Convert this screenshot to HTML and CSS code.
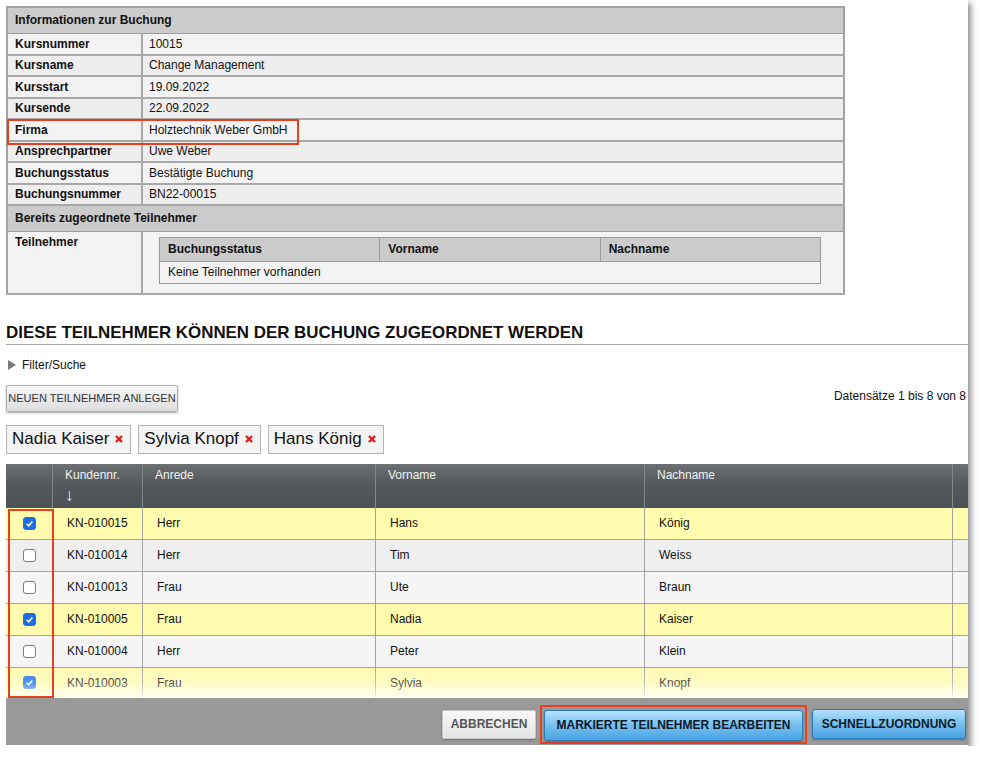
FILE: index.html
```html
<!DOCTYPE html>
<html lang="de">
<head>
    <meta charset="UTF-8">
    <meta name="viewport" content="width=device-width, initial-scale=1.0">
    <title>Teilnehmer zuordnen</title>
    <link rel="stylesheet" href="styles.css">
</head>
<body>
    <div class="window">
        <table class="info">
            <colgroup>
                <col class="label-col">
                <col>
            </colgroup>
            <tr><th class="group" colspan="2">Informationen zur Buchung</th></tr>
            <tr class="odd"><td class="label">Kursnummer</td><td>10015</td></tr>
            <tr class="even"><td class="label">Kursname</td><td>Change Management</td></tr>
            <tr class="odd"><td class="label">Kursstart</td><td>19.09.2022</td></tr>
            <tr class="even"><td class="label">Kursende</td><td>22.09.2022</td></tr>
            <tr class="odd"><td class="label marked">Firma</td><td>Holztechnik Weber GmbH</td></tr>
            <tr class="even"><td class="label">Ansprechpartner</td><td>Uwe Weber</td></tr>
            <tr class="odd"><td class="label">Buchungsstatus</td><td>Bestätigte Buchung</td></tr>
            <tr class="even"><td class="label">Buchungsnummer</td><td>BN22-00015</td></tr>
            <tr><th class="group" colspan="2">Bereits zugeordnete Teilnehmer</th></tr>
            <tr class="odd">
                <td class="label top">Teilnehmer</td>
                <td class="nested-cell">
                    <table class="nested">
                        <tr><th>Buchungsstatus</th><th>Vorname</th><th>Nachname</th></tr>
                        <tr><td colspan="3">Keine Teilnehmer vorhanden</td></tr>
                    </table>
                </td>
            </tr>
        </table>

        <h2 class="section-title">DIESE TEILNEHMER KÖNNEN DER BUCHUNG ZUGEORDNET WERDEN</h2>

        <div class="filter"><span class="tri"></span>Filter/Suche</div>

        <div class="toolbar">
            <button class="btn-light">NEUEN TEILNEHMER ANLEGEN</button>
            <span class="count">Datensätze 1 bis 8 von 8</span>
        </div>

        <div class="chips">
            <span class="chip">Nadia Kaiser<svg class="x" viewBox="0 0 8 8"><path d="M1 1L7 7M7 1L1 7"/></svg></span>
            <span class="chip">Sylvia Knopf<svg class="x" viewBox="0 0 8 8"><path d="M1 1L7 7M7 1L1 7"/></svg></span>
            <span class="chip">Hans König<svg class="x" viewBox="0 0 8 8"><path d="M1 1L7 7M7 1L1 7"/></svg></span>
        </div>

        <div class="grid">
            <div class="grid-head row">
                <div class="cell"></div>
                <div class="cell">Kundennr.<br><span class="sort">↓</span></div>
                <div class="cell">Anrede</div>
                <div class="cell">Vorname</div>
                <div class="cell">Nachname</div>
                <div class="cell"></div>
            </div>
            <div class="grid-body">
                <div class="row sel"><div class="cell cb-cell"><span class="cb on"><svg viewBox="0 0 13 13"><path d="M3.2 6.8l2.3 2.3 4.3-5"/></svg></span></div><div class="cell">KN-010015</div><div class="cell">Herr</div><div class="cell">Hans</div><div class="cell">König</div><div class="cell"></div></div>
                <div class="row even"><div class="cell cb-cell"><span class="cb"></span></div><div class="cell">KN-010014</div><div class="cell">Herr</div><div class="cell">Tim</div><div class="cell">Weiss</div><div class="cell"></div></div>
                <div class="row odd"><div class="cell cb-cell"><span class="cb"></span></div><div class="cell">KN-010013</div><div class="cell">Frau</div><div class="cell">Ute</div><div class="cell">Braun</div><div class="cell"></div></div>
                <div class="row sel"><div class="cell cb-cell"><span class="cb on"><svg viewBox="0 0 13 13"><path d="M3.2 6.8l2.3 2.3 4.3-5"/></svg></span></div><div class="cell">KN-010005</div><div class="cell">Frau</div><div class="cell">Nadia</div><div class="cell">Kaiser</div><div class="cell"></div></div>
                <div class="row odd"><div class="cell cb-cell"><span class="cb"></span></div><div class="cell">KN-010004</div><div class="cell">Herr</div><div class="cell">Peter</div><div class="cell">Klein</div><div class="cell"></div></div>
                <div class="row sel last"><div class="cell cb-cell"><span class="cb on"><svg viewBox="0 0 13 13"><path d="M3.2 6.8l2.3 2.3 4.3-5"/></svg></span></div><div class="cell">KN-010003</div><div class="cell">Frau</div><div class="cell">Sylvia</div><div class="cell">Knopf</div><div class="cell"></div></div>
                <div class="fade"></div>
            </div>
            <div class="select-mark"></div>
            <div class="grid-foot">
                <button class="btn-cancel">ABBRECHEN</button>
                <span class="mark"><button class="btn-blue">MARKIERTE TEILNEHMER BEARBEITEN</button></span>
                <button class="btn-blue">SCHNELLZUORDNUNG</button>
            </div>
        </div>
    </div>
</body>
</html>
```

FILE: styles.css
```css
* {
    box-sizing: border-box;
    margin: 0;
    padding: 0;
}
body {
    font-family: "Liberation Sans", Arial, Helvetica, sans-serif;
    font-size: 12px;
    color: #111;
    background-color: #fff;
}
.window {
    width: 968px;
    padding: 6px 0 1px 6px;
    background-color: #fff;
    box-shadow: 3px 3px 6px rgba(0, 0, 0, 0.45);
}

/* info table */
.info {
    width: 839px;
    border-collapse: collapse;
    border: 2px solid #a2a2a2;
}
.label-col {
    width: 135px;
}
.info th.group {
    background-color: #cbcbcb;
    text-align: left;
    height: 26px;
    padding: 0 7px;
    border: 1px solid #9c9c9c;
}
.info td {
    height: 21.5px;
    padding: 0 6px;
    border: 1px solid #a8a8a8;
    border-bottom-width: 2px;
}
.info td.label {
    font-weight: bold;
    padding-left: 7px;
    border-right-width: 2px;
}
.info tr.odd td {
    background-color: #f3f3f3;
}
.info tr.even td {
    background-color: #eeeeee;
}
.info td.marked {
    position: relative;
}
.info td.marked::after {
    content: "";
    position: absolute;
    left: -1px;
    top: -1px;
    width: 288px;
    height: 22px;
    border: 2px solid #e8401f;
}
.info td.top {
    vertical-align: top;
    padding-top: 3px;
}
.info td.nested-cell {
    padding: 5px 22px 9px 16px;
}
.nested {
    width: 100%;
    border-collapse: collapse;
    border: 1px solid #9a9a9a;
}
.nested th {
    background-color: #cbcbcb;
    text-align: left;
    height: 24px;
    padding: 0 8px;
    border: 1px solid #9a9a9a;
    width: 33.3%;
}
.info .nested td {
    height: 22px;
    padding: 0 8px;
    background-color: #f1f1f1;
    border: 1px solid #9a9a9a;
}

/* section */
.section-title {
    margin-top: 28px;
    font-size: 16.9px;
    line-height: 20px;
    padding-bottom: 1px;
    border-bottom: 1px solid #a8a8a8;
    color: #111;
}
.filter {
    margin-top: 12px;
    line-height: 16px;
    display: flex;
    align-items: center;
    padding-left: 2px;
}
.tri {
    width: 0;
    height: 0;
    border-top: 5px solid transparent;
    border-bottom: 5px solid transparent;
    border-left: 8px solid #7a7a7a;
    margin-right: 6px;
}
.toolbar {
    margin-top: 12px;
    display: flex;
    justify-content: space-between;
    align-items: flex-start;
}
.btn-light {
    height: 27px;
    width: 172px;
    font-family: inherit;
    font-size: 11px;
    color: #333;
    background: linear-gradient(#f6f6f6, #dedede);
    border: 1px solid #b0b0b0;
    border-radius: 2px;
    box-shadow: 0 1px 2px rgba(0, 0, 0, 0.35);
}
.count {
    margin-top: 3px;
    margin-right: 2px;
    line-height: 16px;
}
.chips {
    margin-top: 13px;
    display: flex;
}
.chip {
    height: 29px;
    display: flex;
    align-items: center;
    padding: 0 7px 0 5px;
    font-size: 17px;
    background-color: #f3f3f3;
    border: 1px solid #b4b4b4;
    margin-right: 7px;
}
.chip:nth-child(2) {
    margin-right: 7px;
}
.chip .x {
    width: 8px;
    height: 8px;
    margin-left: 6px;
    stroke: #e01b1b;
    stroke-width: 2.4;
    fill: none;
}

/* data grid */
.grid {
    margin-top: 10px;
    width: 962px;
    position: relative;
}
.row {
    display: grid;
    grid-template-columns: 47px 90px 233px 269px 308px 15px;
}
.grid-head {
    height: 44px;
    background: linear-gradient(#6d7174, #545a5d 40%, #4c5154);
    color: #f2f2f2;
}
.grid-head .cell {
    padding: 1px 12px 0;
    line-height: 20px;
    border-right: 1px solid #83878a;
}
.grid-head .cell:last-child {
    border-right: none;
}
.sort {
    font-size: 17px;
    line-height: 22px;
}
.grid-body {
    height: 190px;
    overflow: hidden;
    position: relative;
}
.grid-body .row {
    height: 32px;
    border-bottom: 1px solid #a3a3a3;
}
.grid-body .row.last {
    height: 30px;
    border-bottom: none;
}
.grid-body .cell {
    display: flex;
    align-items: center;
    padding: 0 14px;
    border-right: 1px solid #a3a3a3;
}
.grid-body .cell:last-child {
    border-right: none;
}
.row.sel {
    background-color: #fffcae;
}
.row.even {
    background-color: #efefef;
}
.row.odd {
    background-color: #f5f5f5;
}
.grid-body .cb-cell {
    justify-content: center;
    padding: 0;
}
.cb {
    width: 13px;
    height: 13px;
    border: 1px solid #7c7c7c;
    border-radius: 3px;
    background-color: #fff;
}
.cb.on {
    background-color: #1a6fe6;
    border-color: #1a6fe6;
}
.cb svg {
    display: block;
    width: 11px;
    height: 11px;
    fill: none;
    stroke: #fff;
    stroke-width: 2;
}
.fade {
    position: absolute;
    left: 0;
    right: 0;
    bottom: 0;
    height: 30px;
    background: linear-gradient(rgba(255, 255, 255, 0.1), rgba(255, 255, 255, 0.25) 50%, rgba(255, 255, 255, 0.85));
}
.select-mark {
    position: absolute;
    left: 2px;
    top: 45px;
    width: 46px;
    height: 189px;
    border: 2px solid #e8401f;
}
.grid-foot {
    height: 47px;
    background-color: #9a9a9a;
    display: flex;
    justify-content: flex-end;
    align-items: center;
    padding: 6px 2px 0 0;
}
.btn-cancel {
    height: 29px;
    width: 94px;
    font-family: inherit;
    font-size: 12px;
    font-weight: bold;
    color: #555;
    background: linear-gradient(#f8f8f8, #e4e4e4);
    border: 1px solid #c8c8c8;
    border-radius: 2px;
    box-shadow: 0 1px 2px rgba(0, 0, 0, 0.3);
}
.mark {
    margin-left: 4px;
    margin-right: 5px;
    padding: 3px 2px 1px;
    border: 2px solid #e8401f;
}
.btn-blue {
    display: block;
    height: 31px;
    padding: 0 6px;
    font-family: inherit;
    font-size: 12px;
    font-weight: bold;
    color: #0c1b2a;
    background: linear-gradient(#b6e0fa, #7cc2f0 45%, #4aa3e4);
    border: 1px solid #2c79b8;
    border-radius: 3px;
    box-shadow: 0 1px 2px rgba(0, 0, 0, 0.3);
}
.mark .btn-blue {
    width: 259px;
}
.grid-foot > .btn-blue {
    width: 154px;
    height: 30px;
}
```
